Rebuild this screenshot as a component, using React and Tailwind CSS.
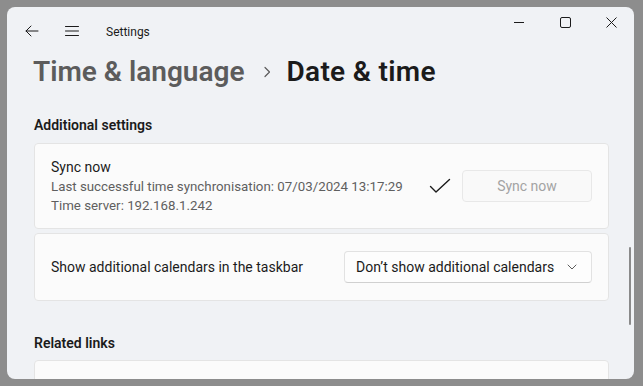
import React from 'react';

const font = { fontFamily: '"Segoe UI", Roboto, "Noto Sans", sans-serif' };

const BackIcon = () => (
  <svg width="16" height="16" viewBox="0 0 16 16" fill="none" stroke="#1b1b1b" strokeWidth="1" strokeLinecap="round" strokeLinejoin="round">
    <path d="M14 8H2M7 3 2 8l5 5" />
  </svg>
);

const MenuIcon = () => (
  <svg width="16" height="16" viewBox="0 0 16 16" fill="none" stroke="#1b1b1b" strokeWidth="1" strokeLinecap="round">
    <path d="M1.5 3.5h13M1.5 8h13M1.5 12.5h13" />
  </svg>
);

const WindowControls = () => (
  <div className="flex h-[30px]">
    <div className="flex w-[46px] items-center justify-center">
      <svg width="10" height="10" viewBox="0 0 10 10" stroke="#1b1b1b" strokeWidth="1">
        <path d="M0 5.5h10" />
      </svg>
    </div>
    <div className="flex w-[46px] items-center justify-center">
      <svg width="11" height="11" viewBox="0 0 11 11" fill="none" stroke="#1b1b1b" strokeWidth="1">
        <rect x="0.5" y="0.5" width="10" height="10" rx="1.5" />
      </svg>
    </div>
    <div className="flex w-[46px] items-center justify-center">
      <svg width="11" height="11" viewBox="0 0 11 11" stroke="#1b1b1b" strokeWidth="1">
        <path d="M0.5 0.5l10 10M10.5 0.5l-10 10" />
      </svg>
    </div>
  </div>
);

export default function App() {
  return (
    <div className="h-[386px] w-[643px] overflow-hidden bg-[#8d8d8d] pl-[7px] pt-[7px]" style={font}>
      <div className="relative flex h-[372px] w-[627px] flex-col overflow-hidden rounded-[8px] bg-[#f0f2f5]">
        {/* title bar */}
        <div className="flex items-start justify-between">
          <div className="flex h-[48px] items-center pl-[17px]">
            <div className="flex w-[40px] items-center">
              <BackIcon />
            </div>
            <MenuIcon />
            <span className="ml-[26px] mt-[1px] text-[12px] text-[#1b1b1b]">Settings</span>
          </div>
          <WindowControls />
        </div>

        {/* page header */}
        <div className="-mt-[3px] flex h-[40px] items-center pl-[26px] text-[28px] font-semibold leading-[40px]">
          <span className="text-[#5c5c5c]">Time &amp; language</span>
          <svg className="ml-[18px] mr-[16px]" width="8" height="12" viewBox="0 0 8 12" fill="none" stroke="#5c5c5c" strokeWidth="1.2" strokeLinecap="round" strokeLinejoin="round">
            <path d="M2 1.5 6.5 6 2 10.5" />
          </svg>
          <span className="tracking-[0.3px] text-[#1b1b1b]">Date &amp; time</span>
        </div>

        <div className="flex flex-col pl-[27px] pr-[25px]">
          <h2 className="mt-[23px] text-[14px] font-semibold leading-[20px] text-[#1b1b1b]">Additional settings</h2>

          {/* sync card */}
          <div className="mt-[8px] flex h-[86px] items-center justify-between rounded-[4px] border border-[#e4e4e4] bg-[#fbfbfb] pl-[16px] pr-[16px]">
            <div className="flex flex-col pt-[1px]">
              <span className="text-[14px] leading-[19px] text-[#1b1b1b]">Sync now</span>
              <span className="text-[13.3px] leading-[19px] text-[#5f5f5f]">Last successful time synchronisation: 07/03/2024 13:17:29</span>
              <span className="text-[13.3px] leading-[19px] text-[#5f5f5f]">Time server: 192.168.1.242</span>
            </div>
            <div className="flex items-center">
              <svg width="22" height="16" viewBox="0 0 22 16" fill="none" stroke="#1b1b1b" strokeWidth="1.4" strokeLinecap="round" strokeLinejoin="round">
                <path d="M1.5 8.5 7 14 20.5 1.5" />
              </svg>
              <div className="ml-[11px] flex h-[32px] w-[130px] items-center justify-center rounded-[4px] border border-[#e8e8e8] bg-[#f9f9f9] text-[14px] text-[#a3a3a3]">
                Sync now
              </div>
            </div>
          </div>

          {/* calendars card */}
          <div className="mt-[4px] flex h-[68px] items-center justify-between rounded-[4px] border border-[#e4e4e4] bg-[#fbfbfb] pl-[16px] pr-[16px]">
            <span className="text-[14px] text-[#1b1b1b]">Show additional calendars in the taskbar</span>
            <div className="flex h-[32px] w-[248px] items-center justify-between rounded-[4px] border border-[#e2e2e2] border-b-[#d0d0d0] bg-[#fdfdfd] pl-[11px] pr-[14px] text-[14px] text-[#1b1b1b]">
              <span>Don’t show additional calendars</span>
              <svg width="10" height="6" viewBox="0 0 10 6" fill="none" stroke="#5c5c5c" strokeWidth="1" strokeLinecap="round" strokeLinejoin="round">
                <path d="M1 1l4 4 4-4" />
              </svg>
            </div>
          </div>

          <h2 className="mt-[32px] text-[14px] font-semibold leading-[20px] text-[#1b1b1b]">Related links</h2>
          <div className="mt-[7px] h-[60px] rounded-[4px] border border-[#e4e4e4] bg-[#fbfbfb]" />
        </div>

        {/* scroll indicator */}
        <div className="absolute right-[3px] top-[240px] h-[78px] w-[2px] rounded-full bg-[#8a8a8a]" />
      </div>
    </div>
  );
}
